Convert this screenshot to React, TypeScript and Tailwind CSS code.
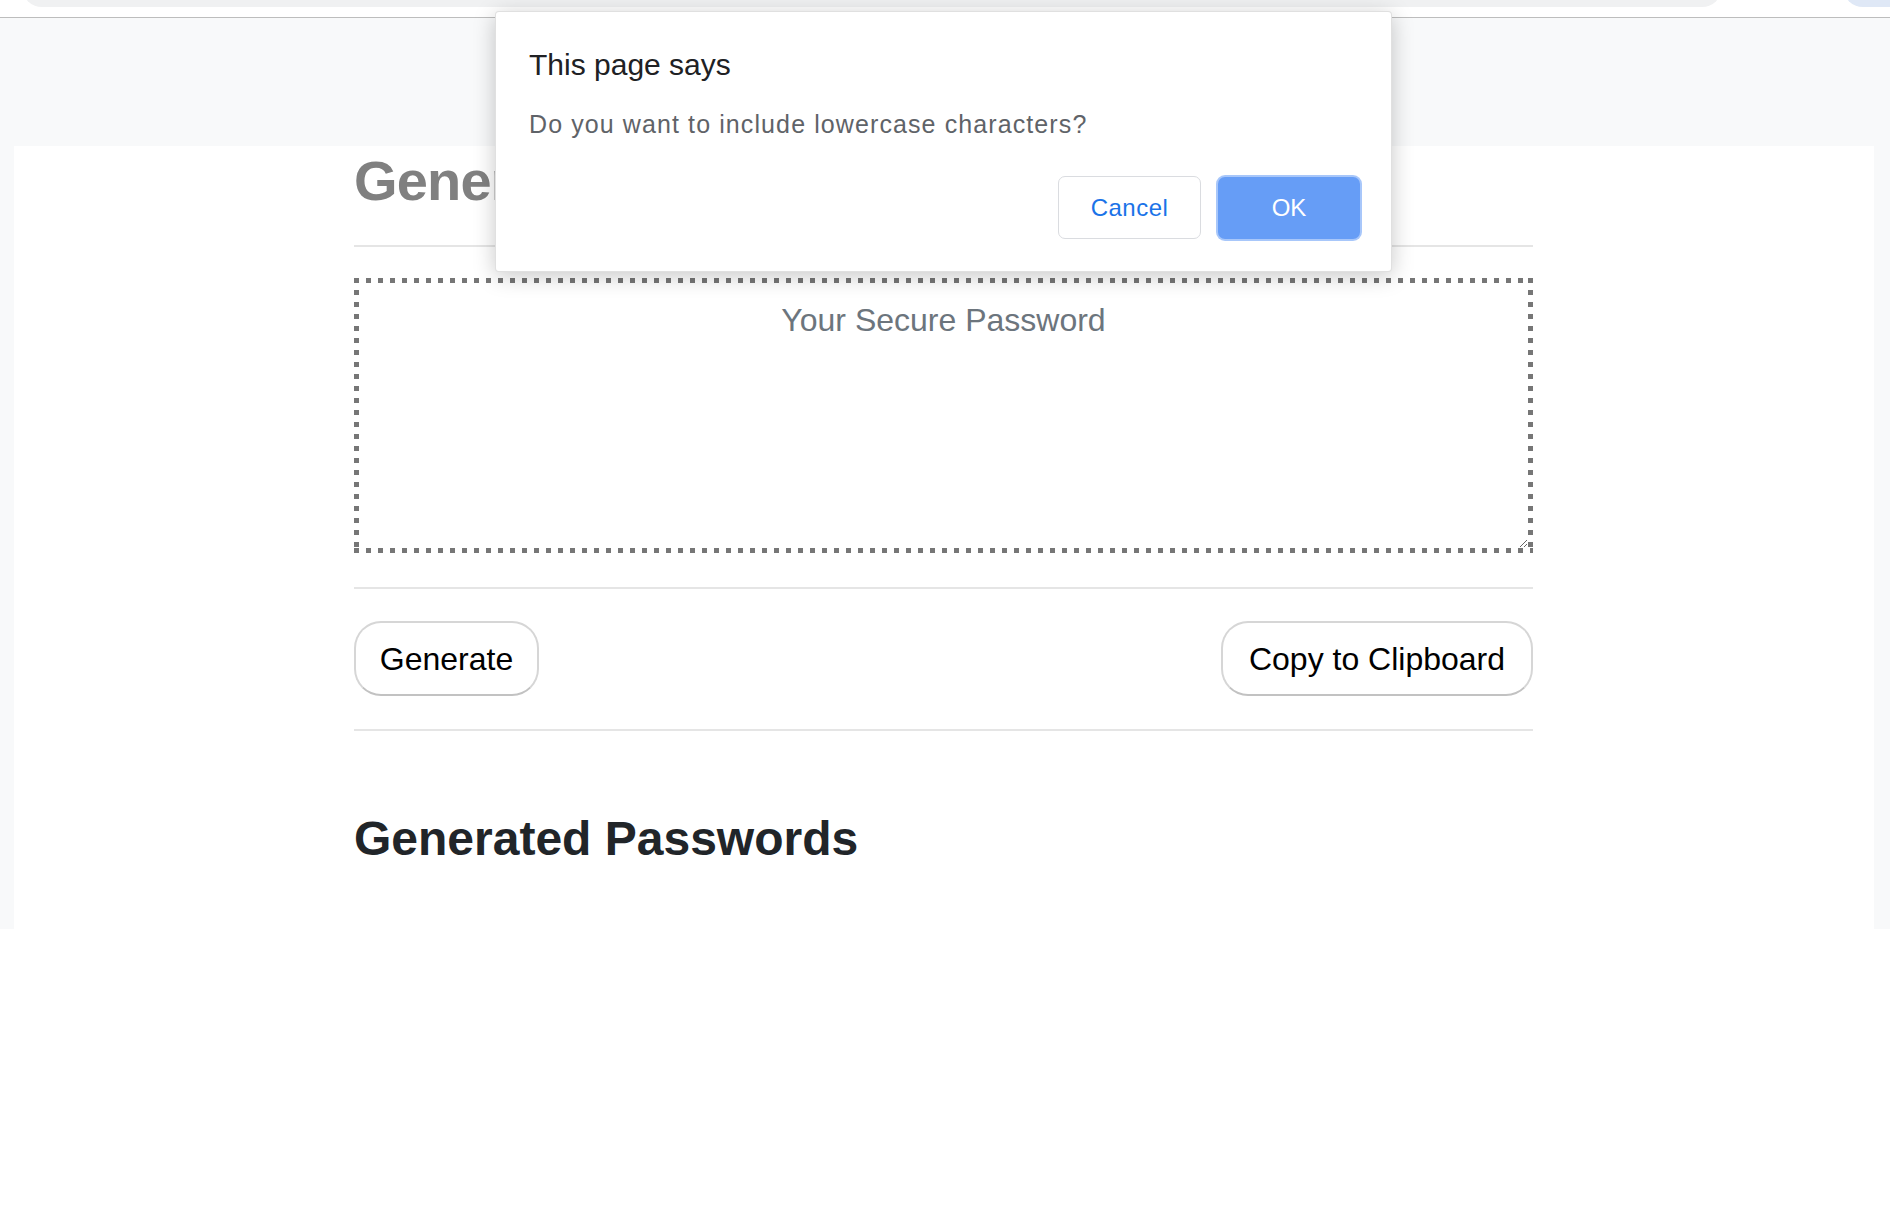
import React from "react";

const dotted =
  "[background:repeating-linear-gradient(90deg,#767676_0_5px,transparent_5px_12px)_top/100%_5px_no-repeat,repeating-linear-gradient(90deg,#767676_0_5px,transparent_5px_12px)_bottom/100%_5px_no-repeat,repeating-linear-gradient(180deg,#767676_0_5px,transparent_5px_12px)_left/5px_100%_no-repeat,repeating-linear-gradient(180deg,#767676_0_5px,transparent_5px_12px)_right/5px_100%_no-repeat]";

export default function App() {
  return (
    <div className="relative min-h-[1206px] bg-white font-['Liberation_Sans',Arial,sans-serif]">
      {/* browser chrome remnant */}
      <div className="flex h-[17px] items-start justify-between bg-white">
        <div className="ml-[22px] flex h-[7px] w-[1700px] items-end overflow-hidden">
          <div className="h-[40px] w-full shrink-0 rounded-[20px] bg-[#f0f1f2]" />
        </div>
        <div className="flex h-[7px] w-[47px] items-end overflow-hidden">
          <div className="h-[40px] w-[80px] shrink-0 rounded-full bg-[#dfe8f6]" />
        </div>
      </div>
      <div className="h-px bg-[#bdbdbd]" />

      {/* page */}
      <div className="bg-[#f8f9fa] pl-[14px] pr-[16px] pt-[128px]">
        <div className="h-[783px] bg-white pl-[340px]">
          <div className="w-[1179px] pt-px">
            <h1 className="text-[56px] font-bold leading-[67px] tracking-[-0.8px] text-[#808080]">
              Generate a Password
            </h1>
            <div className="mt-[31px] h-[2px] bg-[#e5e5e5]" />
            <div className={`mt-[31px] h-[275px] p-[5px] ${dotted}`}>
              <textarea
                className="block h-full w-full resize bg-transparent pt-[13px] text-center text-[32px] leading-[48px] text-[#212529] outline-none placeholder:text-[#6c757d]"
                placeholder="Your Secure Password"
              />
            </div>
            <div className="mt-[34px] h-[2px] bg-[#e5e5e5]" />
            <div className="mt-[32px] flex items-center justify-between">
              <button className="h-[75px] w-[185px] rounded-[27px] border-2 border-[#d6d6d6] border-b-[#c2c2c2] bg-white text-[32px] text-black">
                Generate
              </button>
              <button className="h-[75px] w-[312px] rounded-[27px] border-2 border-[#d6d6d6] border-b-[#c2c2c2] bg-white text-[32px] text-black">
                Copy to Clipboard
              </button>
            </div>
            <div className="mt-[33px] h-[2px] bg-[#e5e5e5]" />
            <h2 className="mt-[79px] text-[48px] font-bold leading-[58px] text-[#212529]">
              Generated Passwords
            </h2>
          </div>
        </div>
      </div>

      {/* alert dialog */}
      <div className="absolute left-[495px] top-[11px] flex h-[261px] w-[897px] flex-col rounded-[4px] border border-[rgba(0,0,0,0.12)] bg-white pl-[33px] pr-[31px] pt-[35px] shadow-[0_4px_22px_rgba(0,0,0,0.22)]">
        <div className="text-[30px] leading-[36px] text-[#202124]">This page says</div>
        <div className="mt-[26px] text-[25px] leading-[30px] tracking-[1.1px] text-[#5f6368]">
          Do you want to include lowercase characters?
        </div>
        <div className="mt-[37px] flex items-center justify-end gap-[17px]">
          <button className="h-[63px] w-[143px] rounded-[7px] border border-[#dadce0] bg-white text-[24px] tracking-[0.5px] text-[#1a73e8]">
            Cancel
          </button>
          <button className="h-[62px] w-[142px] rounded-[7px] bg-[#669df6] text-[24px] text-white shadow-[0_0_0_2px_#a8c7fa]">
            OK
          </button>
        </div>
      </div>
    </div>
  );
}
